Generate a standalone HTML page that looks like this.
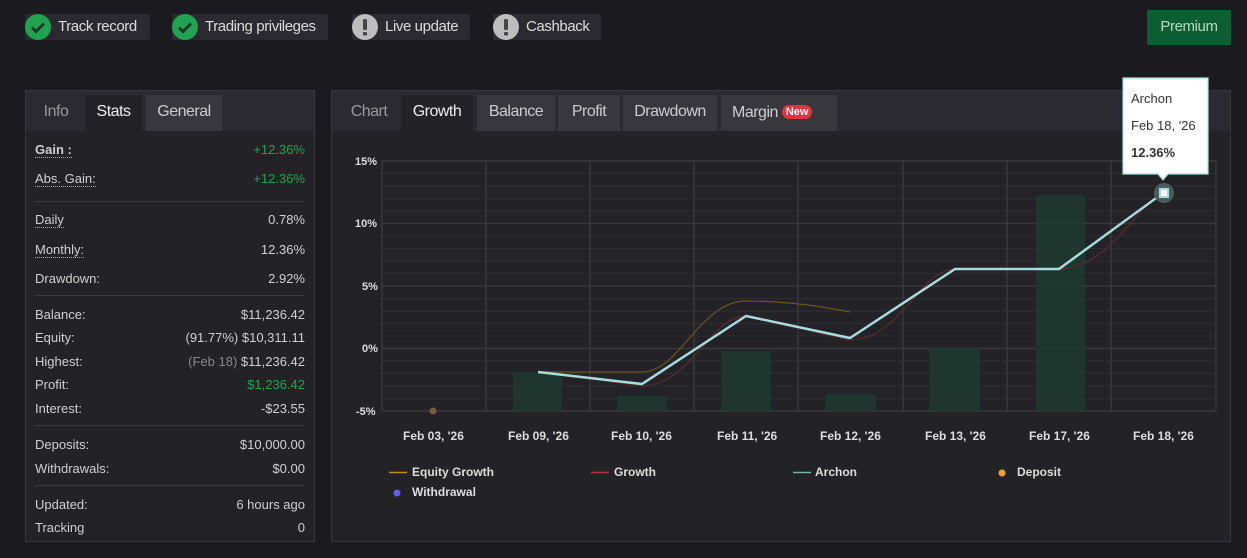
<!DOCTYPE html>
<html><head><meta charset="utf-8"><style>
*{box-sizing:border-box;margin:0;padding:0}
body{width:1247px;height:558px;background:#1b1a1f;font-family:"Liberation Sans",sans-serif;color:#d8d8d8;position:relative;overflow:hidden}
.badge{position:absolute;top:14px;height:26px;background:#2b2a30;border-radius:2px;font-size:15px;color:#dcdcdc;line-height:26px;padding-left:33px;white-space:nowrap;overflow:hidden;letter-spacing:-0.4px}
.badge .ic{position:absolute;left:0;top:0;width:26px;height:26px;border-radius:50%}
.ok{background:#1fa352}
.warn{background:#bdbdbd}
.prem{position:absolute;left:1147px;top:10px;width:84px;height:35px;background:#0c5f33;border-radius:2px;color:#b9d9c4;font-size:15px;text-align:center;line-height:33px;letter-spacing:-0.4px}
.panel{position:absolute;background:#232227;border:1px solid #38373d}
.tabs{position:absolute;left:0;top:0;right:0;height:40px;background:#2b2a30}
.tab{position:absolute;top:4px;height:36px;line-height:34px;font-size:16px;color:#999;text-align:center;letter-spacing:-0.5px;white-space:nowrap}
.tab.act{background:#232227;color:#eee}
.tab.bg{background:#38373d;color:#ccc}
.row{position:absolute;left:9px;right:9px;font-size:13px;color:#d0d0d0}
.row .r{position:absolute;right:0;top:0}
.u{border-bottom:1px dotted #aaa}
.sep{position:absolute;left:9px;right:9px;height:1px;background:#3c3b41}
.g{color:#1fa352}
.ax{position:absolute;font-size:11px;font-weight:bold;color:#ddd;white-space:nowrap}
.lg{position:absolute;font-size:12px;font-weight:bold;color:#ddd}
</style></head><body>
<div class="badge" style="left:25px;width:125px"><div class="ic ok"><svg width="26" height="26"><path d="M7 13.5l4 4 8-8" stroke="#1b3a26" stroke-width="3" fill="none"/></svg></div>Track record</div>
<div class="badge" style="left:172px;width:156px"><div class="ic ok"><svg width="26" height="26"><path d="M7 13.5l4 4 8-8" stroke="#1b3a26" stroke-width="3" fill="none"/></svg></div>Trading privileges</div>
<div class="badge" style="left:352px;width:118px"><div class="ic warn"><svg width="26" height="26"><rect x="11" y="5" width="4" height="11" rx="1.5" fill="#444"/><rect x="11" y="18" width="4" height="3.5" rx="1" fill="#444"/></svg></div>Live update</div>
<div class="badge" style="left:493px;width:108px"><div class="ic warn"><svg width="26" height="26"><rect x="11" y="5" width="4" height="11" rx="1.5" fill="#444"/><rect x="11" y="18" width="4" height="3.5" rx="1" fill="#444"/></svg></div>Cashback</div>
<div class="prem">Premium</div>

<div class="panel" style="left:25px;top:90px;width:290px;height:452px">
<div class="tabs"><div class="tab" style="left:5px;width:50px">Info</div><div class="tab act" style="left:59px;width:57px">Stats</div><div class="tab bg" style="left:120px;width:76px">General</div></div>
<div class="row" style="top:51px;font-weight:bold"><span class="u">Gain :</span><span class="r g" style="font-weight:normal">+12.36%</span></div>
<div class="row" style="top:80px"><span class="u">Abs. Gain:</span><span class="r g">+12.36%</span></div>
<div class="sep" style="top:110px"></div>
<div class="row" style="top:121px"><span class="u">Daily</span><span class="r">0.78%</span></div>
<div class="row" style="top:151px"><span class="u">Monthly:</span><span class="r">12.36%</span></div>
<div class="row" style="top:180px">Drawdown:<span class="r">2.92%</span></div>
<div class="sep" style="top:204px"></div>
<div class="row" style="top:216px">Balance:<span class="r">$11,236.42</span></div>
<div class="row" style="top:239px">Equity:<span class="r">(91.77%) $10,311.11</span></div>
<div class="row" style="top:263px">Highest:<span class="r"><span style="color:#888">(Feb 18)</span> $11,236.42</span></div>
<div class="row" style="top:286px">Profit:<span class="r g">$1,236.42</span></div>
<div class="row" style="top:310px">Interest:<span class="r">-$23.55</span></div>
<div class="sep" style="top:334px"></div>
<div class="row" style="top:346px">Deposits:<span class="r">$10,000.00</span></div>
<div class="row" style="top:370px">Withdrawals:<span class="r">$0.00</span></div>
<div class="sep" style="top:394px"></div>
<div class="row" style="top:406px">Updated:<span class="r">6 hours ago</span></div>
<div class="row" style="top:429px">Tracking<span class="r">0</span></div>
</div>

<div class="panel" style="left:331px;top:90px;width:900px;height:452px">
<div class="tabs"><div class="tab" style="left:5px;width:64px">Chart</div><div class="tab act" style="left:69px;width:72px">Growth</div><div class="tab bg" style="left:145px;width:78px">Balance</div><div class="tab bg" style="left:226px;width:62px">Profit</div><div class="tab bg" style="left:291px;width:94px">Drawdown</div><div class="tab bg" style="left:389px;width:116px;text-align:left;padding-left:11px">Margin <span style="background:#e03444;color:#fff;font-size:11px;font-weight:bold;border-radius:7px;padding:1px 4px;vertical-align:2px;letter-spacing:0">New</span></div></div>
</div>

<svg style="position:absolute;left:0;top:0" width="1247" height="558">
<g stroke="#2e2d33" stroke-width="1">
<path d="M382 173.5H1216M382 186H1216M382 198.5H1216M382 211H1216M382 236H1216M382 248.5H1216M382 261H1216M382 273.5H1216M382 298.5H1216M382 311H1216M382 323.5H1216M382 336H1216M382 361H1216M382 373.5H1216M382 386H1216M382 398.5H1216"/>
</g>
<g stroke="#38373d" stroke-width="1.5">
<path d="M382 161H1216M382 223.5H1216M382 286H1216M382 348.5H1216M382 411H1216"/>
<path d="M382 161V411M486 161V411M590 161V411M694 161V411M798 161V411M903 161V411M1007 161V411M1111 161V411M1216 161V411"/>
</g>
<g fill="#1e3a30" opacity=".85">
<rect x="513" y="372" width="49" height="39"/><rect x="618" y="396" width="49" height="15"/><rect x="722" y="351" width="49" height="60"/><rect x="826" y="394" width="50" height="17"/><rect x="930" y="348" width="50" height="63"/><rect x="1036" y="195" width="49" height="216"/>
</g>
<circle cx="433" cy="411" r="3.5" fill="#7a5a3a"/>
<path d="M538 372L642 372C680 372 700 301 746 301C790 301 830 308 850 312" stroke="#6a5520" stroke-width="1.2" fill="none"/>
<path d="M538 372L642 386C690 386 710 316 746 316L850 340C900 340 920 269 955 269L1059 269C1110 269 1140 200 1163 193" stroke="#5a2a30" stroke-width="1.2" fill="none"/>
<path d="M538 372L642 384L746 316L850 338L955 269L1059 269L1163 193" stroke="#a8dcdc" stroke-width="2.5" fill="none" stroke-linejoin="round"/>
<circle cx="1164" cy="193" r="10" fill="#4a5c5e"/>
<rect x="1160" y="189" width="8" height="8" fill="#fff" stroke="#a8dcdc" stroke-width="2"/>
<path d="M1123 78h85v96h-40l-5 6-5-6h-35z" fill="#fff" stroke="#a8dcdc" stroke-width="1.2"/>
<text x="1131" y="103" font-family="Liberation Sans" font-size="13" fill="#333">Archon</text>
<text x="1131" y="130" font-family="Liberation Sans" font-size="13" fill="#333">Feb 18, '26</text>
<text x="1131" y="157" font-family="Liberation Sans" font-size="13" font-weight="bold" fill="#333">12.36%</text>
<g stroke-width="1.5"><path d="M389 472.5h18" stroke="#b89020"/><path d="M591 472.5h18" stroke="#b03040"/><path d="M793 472.5h18" stroke="#7ab0b0"/></g>
<circle cx="1002" cy="473" r="3.5" fill="#f0a030"/><circle cx="397" cy="493" r="3.5" fill="#6060f0"/>
</svg>
<div class="ax" style="left:355px;top:156px">15%</div>
<div class="ax" style="left:355px;top:218px">10%</div>
<div class="ax" style="left:362px;top:281px">5%</div>
<div class="ax" style="left:362px;top:343px">0%</div>
<div class="ax" style="left:356px;top:406px">-5%</div>
<div class="ax" style="left:403px;top:429px;font-size:12px">Feb 03, '26</div>
<div class="ax" style="left:508px;top:429px;font-size:12px">Feb 09, '26</div>
<div class="ax" style="left:611px;top:429px;font-size:12px">Feb 10, '26</div>
<div class="ax" style="left:717px;top:429px;font-size:12px">Feb 11, '26</div>
<div class="ax" style="left:820px;top:429px;font-size:12px">Feb 12, '26</div>
<div class="ax" style="left:925px;top:429px;font-size:12px">Feb 13, '26</div>
<div class="ax" style="left:1029px;top:429px;font-size:12px">Feb 17, '26</div>
<div class="ax" style="left:1133px;top:429px;font-size:12px">Feb 18, '26</div>
<div class="lg" style="left:412px;top:465px">Equity Growth</div>
<div class="lg" style="left:614px;top:465px">Growth</div>
<div class="lg" style="left:815px;top:465px">Archon</div>
<div class="lg" style="left:1017px;top:465px">Deposit</div>
<div class="lg" style="left:412px;top:485px">Withdrawal</div>
</body></html>
